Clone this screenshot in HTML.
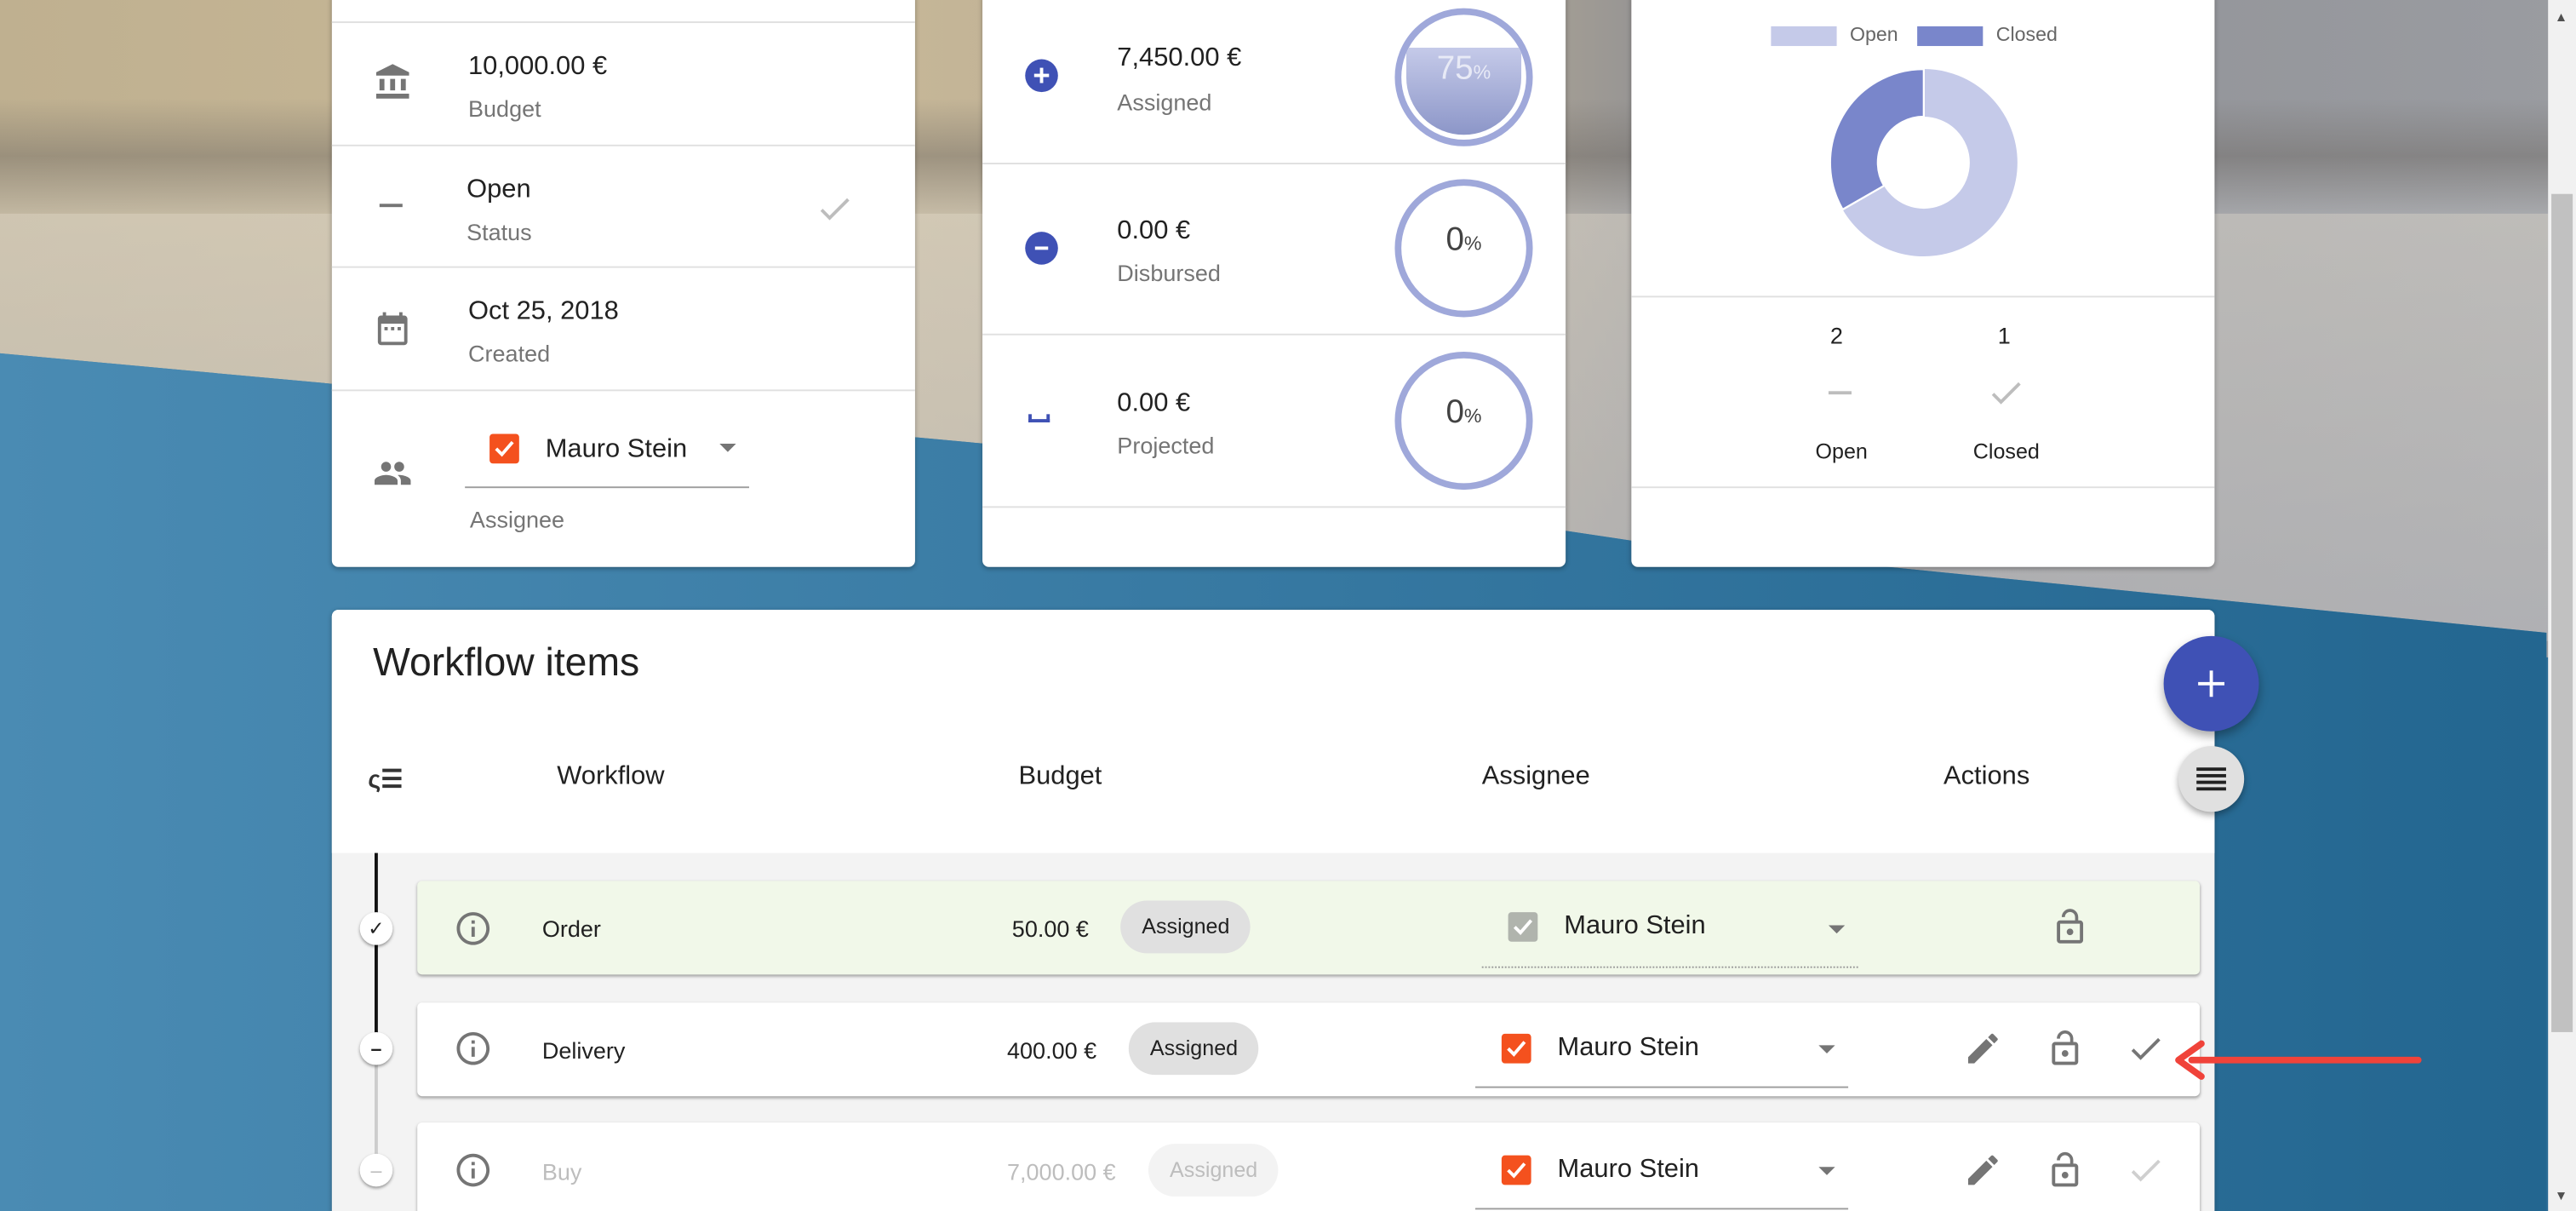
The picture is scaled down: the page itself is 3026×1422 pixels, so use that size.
<!DOCTYPE html>
<html><head><meta charset="utf-8"><style>
html,body{margin:0;padding:0;width:3026px;height:1422px;overflow:hidden;background:#2a6a95}
#w{position:absolute;left:0;top:0;width:1568px;height:737px;transform:scale(1.92985);transform-origin:0 0;overflow:hidden;font-family:"Liberation Sans",sans-serif;color:#212121}
.abs{position:absolute}
.card{position:absolute;background:#fff;border-radius:4px;box-shadow:0 1px 3px rgba(0,0,0,.3)}
.hr{position:absolute;left:0;right:0;height:1px;background:#e0e0e0}
.v{position:absolute;font-size:16px;color:#212121}
.l{position:absolute;font-size:14px;color:#757575}
.circ{position:absolute;width:76px;height:76px;border:4px solid #9fa8da;border-radius:50%;overflow:hidden}
.pct{position:absolute;width:100%;text-align:center;top:22px;font-size:20px;color:#424242}
.pct small{font-size:12px}
.row{position:absolute;left:254px;width:1085px;height:57px;border-radius:3px;box-shadow:0 1px 2px rgba(0,0,0,.35);font-size:14px}
.chip{position:absolute;height:32px;border-radius:16px;background:#e0e0e0;font-size:13px;line-height:32px;padding:0 13px;color:#212121}
.cb{position:absolute;width:18px;height:18px;border-radius:2px;background:#f4511e}
.dot{position:absolute;left:219px;width:20px;height:20px;border-radius:50%;background:#fff;box-shadow:0 1px 2px rgba(0,0,0,.4);text-align:center;font-size:12px;line-height:20px}
</style></head><body><div id="w">
<!-- background -->
<div class="abs" style="left:0;top:0;width:1568px;height:400px;background:linear-gradient(90deg,#bfb090 0%,#c9b998 30%,#b7ab95 55%,#8e8f94 66%,#9a9ca1 100%)"></div>
<div class="abs" style="left:0;top:60px;width:1568px;height:70px;background:linear-gradient(180deg,rgba(120,115,105,0) 0%,rgba(110,105,100,.45) 50%,rgba(200,200,200,.3) 100%)"></div>
<div class="abs" style="left:0;top:130px;width:1568px;height:260px;background:linear-gradient(180deg,rgba(220,215,205,.55),rgba(190,190,192,.6))"></div>
<svg class="abs" style="left:0;top:0" width="1568" height="737"><polygon points="0,215 600,270 1000,330 1550,385 1550,737 0,737" fill="#3a7ea8"/><defs><linearGradient id="bg" x1="0" x2="1"><stop offset="0" stop-color="#4a8bb3"/><stop offset="1" stop-color="#236690"/></linearGradient></defs><polygon points="0,215 600,270 1000,330 1550,385 1550,737 0,737" fill="url(#bg)"/></svg>
<div class="abs" style="left:1551px;top:0;width:17px;height:737px;background:#f1f1f1"></div>
<div class="abs" style="left:1553px;top:118px;width:13px;height:510px;background:#c1c1c1"></div>
<div class="abs" style="left:1555px;top:6px;font-size:8px;color:#505050">▲</div>
<div class="abs" style="left:1555px;top:723px;font-size:8px;color:#505050">▼</div>

<!-- card 1 -->
<div class="card" style="left:202px;top:-5px;width:355px;height:350px">
 <div class="hr" style="top:18px"></div><div class="hr" style="top:93px"></div><div class="hr" style="top:167px"></div><div class="hr" style="top:242px"></div>
</div>
<svg class="abs" style="left:227px;top:38px" width="24" height="24" viewBox="0 0 24 24" fill="#757575"><path d="M4 10h3v7H4zm6.5 0h3v7h-3zM2 19h20v3H2zm15-9h3v7h-3zm-5-9L2 6v2h20V6z"/></svg>
<div class="v" style="left:285px;top:32px">10,000.00 €</div><div class="l" style="left:285px;top:58px">Budget</div>
<div class="abs" style="left:231px;top:124px;width:14px;height:2px;background:#757575"></div>
<div class="v" style="left:284px;top:107px">Open</div><div class="l" style="left:284px;top:133px">Status</div>
<svg class="abs" style="left:496px;top:115px" width="24" height="24" viewBox="0 0 24 24" fill="#bdbdbd"><path d="M9 16.2L4.8 12l-1.4 1.4L9 19 21 7l-1.4-1.4z"/></svg>
<svg class="abs" style="left:227px;top:188px" width="24" height="24" viewBox="0 0 24 24" fill="#757575"><path d="M9 11H7v2h2zm4 0h-2v2h2zm4 0h-2v2h2zm2-7h-1V2h-2v2H8V2H6v2H5c-1.1 0-2 .9-2 2v14c0 1.1.9 2 2 2h14c1.1 0 2-.9 2-2V6c0-1.1-.9-2-2-2zm0 16H5V9h14z"/></svg>
<div class="v" style="left:285px;top:181px">Oct 25, 2018</div><div class="l" style="left:285px;top:207px">Created</div>
<svg class="abs" style="left:227px;top:276px" width="24" height="24" viewBox="0 0 24 24" fill="#757575"><path d="M16 11c1.66 0 3-1.34 3-3s-1.34-3-3-3-3 1.34-3 3 1.34 3 3 3zm-8 0c1.66 0 3-1.34 3-3S9.66 5 8 5 5 6.34 5 8s1.34 3 3 3zm0 2c-2.33 0-7 1.17-7 3.5V19h14v-2.5C15 14.17 10.33 13 8 13zm8 0c-.29 0-.62.02-.97.05 1.16.84 1.97 1.97 1.97 3.45V19h6v-2.5c0-2.33-4.67-3.5-7-3.5z"/></svg>
<div class="cb" style="left:298px;top:264px"></div><svg class="abs" style="left:298px;top:264px" width="18" height="18" viewBox="0 0 18 18"><path d="M4 9l3.5 3.5L14 5" stroke="#fff" stroke-width="2" fill="none"/></svg>
<div class="v" style="left:332px;top:265px">Mauro Stein</div>
<div class="abs" style="left:438px;top:270px;width:0;height:0;border-left:5px solid transparent;border-right:5px solid transparent;border-top:5px solid #757575"></div>
<div class="abs" style="left:283px;top:296px;width:173px;height:1px;background:#9e9e9e"></div>
<div class="l" style="left:286px;top:308px">Assignee</div>

<!-- card 2 -->
<div class="card" style="left:598px;top:-5px;width:355px;height:350px">
 <div class="hr" style="top:104px"></div><div class="hr" style="top:208px"></div><div class="hr" style="top:313px"></div>
</div>
<div class="abs" style="left:624px;top:36px;width:20px;height:20px;border-radius:50%;background:#3f51b5;color:#fff;text-align:center;line-height:20px;font-size:18px;font-weight:bold">+</div>
<div class="v" style="left:680px;top:27px">7,450.00 €</div><div class="l" style="left:680px;top:54px">Assigned</div>
<div class="circ" style="left:849px;top:5px"><div class="abs" style="left:3px;right:3px;top:20px;bottom:3px;border-radius:0 0 40px 40px;background:linear-gradient(#c5cae9,#8c96c8)"></div><div class="pct" style="color:#e8eaf6">75<small>%</small></div></div>
<div class="abs" style="left:624px;top:141px;width:20px;height:20px;border-radius:50%;background:#3f51b5"><div class="abs" style="left:6px;top:9px;width:8px;height:2px;background:#fff"></div></div>
<div class="v" style="left:680px;top:132px">0.00 €</div><div class="l" style="left:680px;top:158px">Disbursed</div>
<div class="circ" style="left:849px;top:109px"><div class="pct">0<small>%</small></div></div>
<div class="abs" style="left:626px;top:252px;width:13px;height:5px;border:2px solid #3f51b5;border-top:none;box-sizing:border-box"></div>
<div class="v" style="left:680px;top:237px">0.00 €</div><div class="l" style="left:680px;top:263px">Projected</div>
<div class="circ" style="left:849px;top:214px"><div class="pct">0<small>%</small></div></div>

<!-- card 3 -->
<div class="card" style="left:993px;top:-5px;width:355px;height:350px">
 <div class="hr" style="top:185px"></div><div class="hr" style="top:301px"></div>
</div>
<div class="abs" style="left:1078px;top:16px;width:40px;height:12px;background:#c5cae9"></div>
<div class="abs" style="left:1126px;top:14px;font-size:12px;color:#666">Open</div>
<div class="abs" style="left:1167px;top:16px;width:40px;height:12px;background:#7986cb"></div>
<div class="abs" style="left:1215px;top:14px;font-size:12px;color:#666">Closed</div>
<svg class="abs" style="left:1113px;top:41px" width="116" height="116" viewBox="-58 -58 116 116">
<circle r="42.5" fill="none" stroke="#c5cae9" stroke-width="29"/>
<path d="M0 -57 A57 57 0 0 0 -49.4 28.5 L-24.2 14 A28 28 0 0 1 0 -28 Z" fill="#7986cb" stroke="#fff" stroke-width="1.2"/>
</svg>
<div class="abs" style="left:1114px;top:196px;font-size:14px">2</div>
<div class="abs" style="left:1216px;top:196px;font-size:14px">1</div>
<div class="abs" style="left:1113px;top:238px;width:14px;height:2px;background:#bdbdbd"></div>
<svg class="abs" style="left:1209px;top:227px" width="24" height="24" viewBox="0 0 24 24" fill="#bdbdbd"><path d="M9 16.2L4.8 12l-1.4 1.4L9 19 21 7l-1.4-1.4z"/></svg>
<div class="abs" style="left:1105px;top:267px;font-size:13px">Open</div>
<div class="abs" style="left:1201px;top:267px;font-size:13px">Closed</div>

<!-- workflow card -->
<div class="card" style="left:202px;top:371px;width:1146px;height:400px;background:#f3f3f3">
 <div class="abs" style="left:0;top:0;width:1146px;height:148px;background:#fff;border-radius:4px 4px 0 0"></div>
</div>
<div class="abs" style="left:227px;top:390px;font-size:24px;color:#212121">Workflow items</div>
<div class="abs" style="left:224px;top:465px;font-size:15px;font-weight:bold;color:#333">ς☰</div>
<div class="abs" style="left:339px;top:464px;font-size:16px">Workflow</div>
<div class="abs" style="left:620px;top:464px;font-size:16px">Budget</div>
<div class="abs" style="left:902px;top:464px;font-size:16px">Assignee</div>
<div class="abs" style="left:1183px;top:464px;font-size:16px">Actions</div>
<div class="abs" style="left:1317px;top:387px;width:58px;height:58px;border-radius:50%;background:#3f51b5;box-shadow:0 3px 6px rgba(0,0,0,.35)"><div class="abs" style="left:28px;top:21px;width:2px;height:16px;background:#fff"></div><div class="abs" style="left:21px;top:28px;width:16px;height:2px;background:#fff"></div></div>
<div class="abs" style="left:1326px;top:454px;width:40px;height:40px;border-radius:50%;background:#e0e0e0;box-shadow:0 2px 4px rgba(0,0,0,.35)">
 <div class="abs" style="left:11px;top:13px;width:18px;height:2px;background:#222;box-shadow:0 4px 0 #222,0 8px 0 #222,0 12px 0 #222"></div></div>

<!-- timeline -->
<div class="abs" style="left:228px;top:519px;width:2px;height:119px;background:#111"></div>
<div class="abs" style="left:228px;top:638px;width:2px;height:80px;background:#ccc"></div>

<!-- rows -->
<div class="row" style="top:536px;background:#f1f8e9"></div>
<div class="row" style="top:610px;background:#fff"></div>
<div class="row" style="top:683px;background:#fff;height:70px"></div>
<div class="dot" style="top:555px">✓</div>
<div class="dot" style="top:628px;font-weight:bold">–</div>
<div class="dot" style="top:702px;color:#bbb">–</div>

<!-- row1 -->
<svg class="abs" style="left:276px;top:553px" width="24" height="24" viewBox="0 0 24 24" fill="#757575"><path d="M11 7h2v2h-2zm0 4h2v6h-2zm1-9C6.48 2 2 6.48 2 12s4.48 10 10 10 10-4.48 10-10S17.52 2 12 2zm0 18c-4.41 0-8-3.59-8-8s3.59-8 8-8 8 3.59 8 8-3.59 8-8 8z"/></svg>
<div class="abs" style="left:330px;top:557px;font-size:14px">Order</div>
<div class="abs" style="left:616px;top:557px;font-size:14px">50.00 €</div>
<div class="chip" style="left:682px;top:548px">Assigned</div>
<div class="cb" style="left:918px;top:555px;background:#b0b4ad"></div><svg class="abs" style="left:918px;top:555px" width="18" height="18"><path d="M4 9l3.5 3.5L14 5" stroke="#fff" stroke-width="2" fill="none"/></svg>
<div class="abs" style="left:952px;top:555px;font-size:16px">Mauro Stein</div>
<div class="abs" style="left:1113px;top:563px;border-left:5px solid transparent;border-right:5px solid transparent;border-top:5px solid #757575"></div>
<div class="abs" style="left:902px;top:588px;width:229px;border-top:1px dotted #999"></div>
<svg class="abs" style="left:1248px;top:552px" width="24" height="24" viewBox="0 0 24 24" fill="#757575"><path d="M12 17c1.1 0 2-.9 2-2s-.9-2-2-2-2 .9-2 2 .9 2 2 2zm6-9h-1V6c0-2.76-2.24-5-5-5S7 3.24 7 6h1.9c0-1.71 1.39-3.1 3.1-3.1 1.71 0 3.1 1.39 3.1 3.1v2H6c-1.1 0-2 .9-2 2v10c0 1.1.9 2 2 2h12c1.1 0 2-.9 2-2V10c0-1.1-.9-2-2-2zm0 12H6V10h12z"/></svg>

<!-- row2 -->
<svg class="abs" style="left:276px;top:626px" width="24" height="24" viewBox="0 0 24 24" fill="#757575"><path d="M11 7h2v2h-2zm0 4h2v6h-2zm1-9C6.48 2 2 6.48 2 12s4.48 10 10 10 10-4.48 10-10S17.52 2 12 2zm0 18c-4.41 0-8-3.59-8-8s3.59-8 8-8 8 3.59 8 8-3.59 8-8 8z"/></svg>
<div class="abs" style="left:330px;top:631px;font-size:14px">Delivery</div>
<div class="abs" style="left:613px;top:631px;font-size:14px">400.00 €</div>
<div class="chip" style="left:687px;top:622px">Assigned</div>
<div class="cb" style="left:914px;top:629px"></div><svg class="abs" style="left:914px;top:629px" width="18" height="18"><path d="M4 9l3.5 3.5L14 5" stroke="#fff" stroke-width="2" fill="none"/></svg>
<div class="abs" style="left:948px;top:629px;font-size:16px">Mauro Stein</div>
<div class="abs" style="left:1107px;top:636px;border-left:5px solid transparent;border-right:5px solid transparent;border-top:5px solid #757575"></div>
<div class="abs" style="left:898px;top:661px;width:227px;height:1px;background:#9e9e9e"></div>
<svg class="abs" style="left:1195px;top:626px" width="24" height="24" viewBox="0 0 24 24" fill="#757575"><path d="M3 17.25V21h3.75L17.81 9.94l-3.75-3.75zM20.71 7.04a1 1 0 0 0 0-1.41l-2.34-2.34a1 1 0 0 0-1.41 0l-1.83 1.83 3.75 3.75z"/></svg>
<svg class="abs" style="left:1245px;top:626px" width="24" height="24" viewBox="0 0 24 24" fill="#757575"><path d="M12 17c1.1 0 2-.9 2-2s-.9-2-2-2-2 .9-2 2 .9 2 2 2zm6-9h-1V6c0-2.76-2.24-5-5-5S7 3.24 7 6h1.9c0-1.71 1.39-3.1 3.1-3.1 1.71 0 3.1 1.39 3.1 3.1v2H6c-1.1 0-2 .9-2 2v10c0 1.1.9 2 2 2h12c1.1 0 2-.9 2-2V10c0-1.1-.9-2-2-2zm0 12H6V10h12z"/></svg>
<svg class="abs" style="left:1294px;top:626px" width="24" height="24" viewBox="0 0 24 24" fill="#757575"><path d="M9 16.2L4.8 12l-1.4 1.4L9 19 21 7l-1.4-1.4z"/></svg>
<svg class="abs" style="left:1318px;top:630px" width="160" height="30"><path d="M154 15H16" stroke="#f0433a" stroke-width="4" stroke-linecap="round"/><path d="M22 5L8 15l14 10" stroke="#f0433a" stroke-width="4" fill="none" stroke-linecap="round" stroke-linejoin="round"/></svg>

<!-- row3 -->
<svg class="abs" style="left:276px;top:700px" width="24" height="24" viewBox="0 0 24 24" fill="#757575"><path d="M11 7h2v2h-2zm0 4h2v6h-2zm1-9C6.48 2 2 6.48 2 12s4.48 10 10 10 10-4.48 10-10S17.52 2 12 2zm0 18c-4.41 0-8-3.59-8-8s3.59-8 8-8 8 3.59 8 8-3.59 8-8 8z"/></svg>
<div class="abs" style="left:330px;top:705px;font-size:14px;color:#bdbdbd">Buy</div>
<div class="abs" style="left:613px;top:705px;font-size:14px;color:#bdbdbd">7,000.00 €</div>
<div class="chip" style="left:699px;top:696px;background:#f3f3f3;color:#bdbdbd">Assigned</div>
<div class="cb" style="left:914px;top:703px"></div><svg class="abs" style="left:914px;top:703px" width="18" height="18"><path d="M4 9l3.5 3.5L14 5" stroke="#fff" stroke-width="2" fill="none"/></svg>
<div class="abs" style="left:948px;top:703px;font-size:16px">Mauro Stein</div>
<div class="abs" style="left:1107px;top:710px;border-left:5px solid transparent;border-right:5px solid transparent;border-top:5px solid #757575"></div>
<div class="abs" style="left:898px;top:735px;width:227px;height:1px;background:#9e9e9e"></div>
<svg class="abs" style="left:1195px;top:700px" width="24" height="24" viewBox="0 0 24 24" fill="#757575"><path d="M3 17.25V21h3.75L17.81 9.94l-3.75-3.75zM20.71 7.04a1 1 0 0 0 0-1.41l-2.34-2.34a1 1 0 0 0-1.41 0l-1.83 1.83 3.75 3.75z"/></svg>
<svg class="abs" style="left:1245px;top:700px" width="24" height="24" viewBox="0 0 24 24" fill="#757575"><path d="M12 17c1.1 0 2-.9 2-2s-.9-2-2-2-2 .9-2 2 .9 2 2 2zm6-9h-1V6c0-2.76-2.24-5-5-5S7 3.24 7 6h1.9c0-1.710 1.39-3.1 3.1-3.1 1.71 0 3.1 1.39 3.1 3.1v2H6c-1.1 0-2 .9-2 2v10c0 1.1.9 2 2 2h12c1.1 0 2-.9 2-2V10c0-1.1-.9-2-2-2zm0 12H6V10h12z"/></svg>
<svg class="abs" style="left:1294px;top:700px" width="24" height="24" viewBox="0 0 24 24" fill="#cfcfcf"><path d="M9 16.2L4.8 12l-1.4 1.4L9 19 21 7l-1.4-1.4z"/></svg>
</div></body></html>
